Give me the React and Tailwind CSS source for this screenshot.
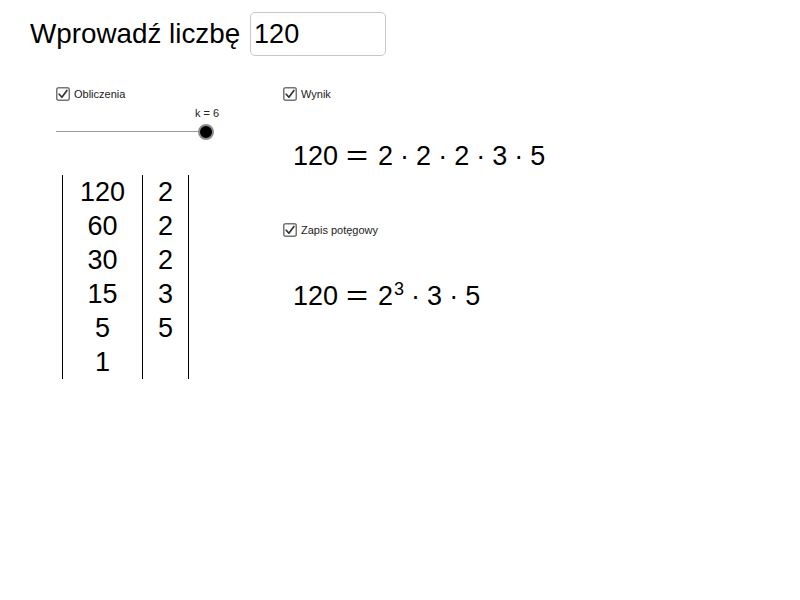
import React from 'react';

const Checkbox = ({ label }) => (
    <div className="flex items-center h-[14px] gap-[4px]">
        <svg width="14" height="14" viewBox="0 0 14 14">
            <rect x="0.75" y="0.75" width="12.5" height="12.5" rx="2" fill="white" stroke="#757575" strokeWidth="1.5" />
            <path d="M3.2 7.2 L5.9 10.2 L10.9 3.4" fill="none" stroke="#333" strokeWidth="1.7" strokeLinecap="round" strokeLinejoin="round" />
        </svg>
        <span className="text-[11px] leading-[13px] text-[#222]">{label}</span>
    </div>
);

const Dot = () => <span className="mx-[7px]">·</span>;

const Eq = () => <span className="ml-[8px] mr-[10px] w-[22px] inline-block text-center scale-x-[1.4]">=</span>;

const rows = [
    ['120', '2'],
    ['60', '2'],
    ['30', '2'],
    ['15', '3'],
    ['5', '5'],
    ['1', ''],
];

const App = () => {
    return (
        <div className="w-[800px] h-[600px] bg-white text-black font-['Liberation_Sans',_Arial,_sans-serif]">
            <div className="flex items-center pl-[30px] pt-[12px]">
                <span className="text-[27.8px] leading-[44px]">Wprowadź liczbę</span>
                <div className="ml-[10px] w-[136px] h-[44px] border border-[#c8c8c8] rounded-[5px] flex items-center pl-[3px] text-[27px]">
                    120
                </div>
            </div>

            <div className="flex">
                <div className="ml-[56px] w-[227px] pt-[31px]">
                    <Checkbox label="Obliczenia" />
                    <div className="mt-[6px] pl-[139px] text-[11px] leading-[13px] text-[#222]">k = 6</div>
                    <div className="relative mt-[3px] w-[160px] h-[18px]">
                        <div className="absolute left-0 top-[8px] w-[150px] h-px bg-[#9a9a9a]"></div>
                        <div className="absolute left-[142px] top-[1px] w-[16px] h-[16px] rounded-full bg-black border-[2px] border-[#8c8c8c]"></div>
                    </div>
                    <div className="mt-[34px] ml-[6px] flex w-[127px] border-l border-r border-black text-[27px]">
                        <div className="w-[80px] border-r border-black">
                            {rows.map((r, i) => (
                                <div key={i} className="h-[34px] leading-[34px] text-center">{r[0]}</div>
                            ))}
                        </div>
                        <div className="w-[45px]">
                            {rows.map((r, i) => (
                                <div key={i} className="h-[34px] leading-[34px] text-center">{r[1]}</div>
                            ))}
                        </div>
                    </div>
                </div>

                <div className="pt-[31px]">
                    <Checkbox label="Wynik" />
                    <div className="mt-[38px] ml-[10px] flex text-[27px] leading-[34px]">
                        <span>120</span>
                        <Eq />
                        <span>2</span>
                        <Dot />
                        <span>2</span>
                        <Dot />
                        <span>2</span>
                        <Dot />
                        <span>3</span>
                        <Dot />
                        <span>5</span>
                    </div>
                    <div className="mt-[50px]">
                        <Checkbox label="Zapis potęgowy" />
                    </div>
                    <div className="mt-[42px] ml-[10px] flex text-[27px] leading-[34px]">
                        <span>120</span>
                        <Eq />
                        <span>2</span>
                        <span className="text-[18px] leading-[18px] ml-[1px] mt-[1px]">3</span>
                        <Dot />
                        <span>3</span>
                        <Dot />
                        <span>5</span>
                    </div>
                </div>
            </div>
        </div>
    );
};

export default App;
